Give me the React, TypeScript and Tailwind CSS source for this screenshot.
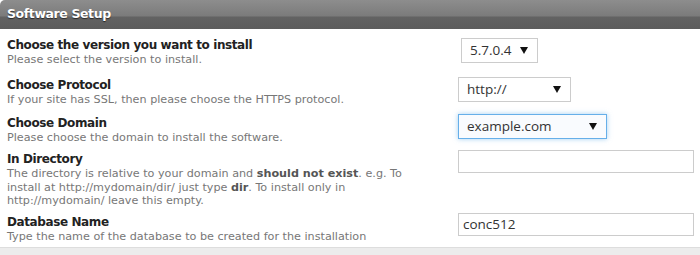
const sans = { fontFamily: '"DejaVu Sans", Verdana, sans-serif' };

function Caret() {
  return (
    <svg width="8" height="7" viewBox="0 0 8 7" className="shrink-0">
      <path d="M0 0 H8 L4 7 Z" fill="#111" />
    </svg>
  );
}

function FakeSelect({
  value,
  width,
  focused,
}: {
  value: string;
  width: string;
  focused?: boolean;
}) {
  return (
    <div
      className={
        'flex h-[25px] items-center justify-between pl-[8px] pr-[9px] text-[13.5px] text-[#333] font-["Open_Sans",sans-serif] ' +
        width +
        (focused
          ? ' border border-[#66afe9] bg-[#f9fbfe] shadow-[0_0_5px_rgba(102,175,233,0.6)]'
          : ' border border-[#cccccc] bg-white')
      }
    >
      <span className="leading-none">{value}</span>
      <Caret />
    </div>
  );
}

function TextBox({ value }: { value?: string }) {
  return (
    <div className="flex h-[23px] w-[236px] items-center border border-[#cccccc] bg-white px-[4px] text-[13.5px] text-[#333] font-['Open_Sans',sans-serif]">
      {value}
    </div>
  );
}

function Row({
  label,
  height,
  controlTop,
  children,
  desc,
}: {
  label: string;
  height: string;
  controlTop: string;
  children: React.ReactNode;
  desc: React.ReactNode;
}) {
  return (
    <div className={'flex ' + height}>
      <div className="w-[458px] pl-[7px] pt-[5px]">
        <div className="text-[12px] font-bold leading-[15px] tracking-[-0.4px] text-[#222]">{label}</div>
        <div className="w-[422px] text-[11.2px] leading-[13.5px] text-[#777]">{desc}</div>
      </div>
      <div className={controlTop}>{children}</div>
    </div>
  );
}

export default function App() {
  return (
    <div className="h-[255px] w-[700px] bg-white" style={sans}>
      <div className="flex h-[29px] items-center rounded-tl-[5px] bg-[linear-gradient(#8d8d8d_0px,#7b7b7b_16px,#626262_17px,#5c5c5c_29px)] pl-[7px]">
        <span className="text-[12.5px] font-bold tracking-[-0.4px] text-white [text-shadow:0_1px_1px_rgba(0,0,0,0.6)]">
          Software Setup
        </span>
      </div>
      <div className="h-[218px]">
        <div className="h-[4px]" />
        <Row
          label="Choose the version you want to install"
          height="h-[40px]"
          controlTop="pt-[5px] pl-[3px]"
          desc="Please select the version to install."
        >
          <FakeSelect value="5.7.0.4" width="w-[77px]" />
        </Row>
        <Row
          label="Choose Protocol"
          height="h-[38px]"
          controlTop="pt-[4px]"
          desc="If your site has SSL, then please choose the HTTPS protocol."
        >
          <FakeSelect value="http://" width="w-[113px]" />
        </Row>
        <Row
          label="Choose Domain"
          height="h-[36px]"
          controlTop="pt-[3px]"
          desc="Please choose the domain to install the software."
        >
          <FakeSelect value="example.com" width="w-[149px]" focused />
        </Row>
        <Row
          label="In Directory"
          height="h-[63px]"
          controlTop="pt-[3px]"
          desc={
            <>
              The directory is relative to your domain and <b className="text-[#555]">should not exist</b>. e.g. To
              install at http://mydomain/dir/ just type <b className="text-[#555]">dir</b>. To install only in
              http://mydomain/ leave this empty.
            </>
          }
        >
          <TextBox />
        </Row>
        <Row
          label="Database Name"
          height="h-[37px]"
          controlTop="pt-[3px]"
          desc="Type the name of the database to be created for the installation"
        >
          <TextBox value="conc512" />
        </Row>
      </div>
      <div className="h-[8px] border-t border-[#dddddd] bg-[#ececec]" />
    </div>
  );
}
